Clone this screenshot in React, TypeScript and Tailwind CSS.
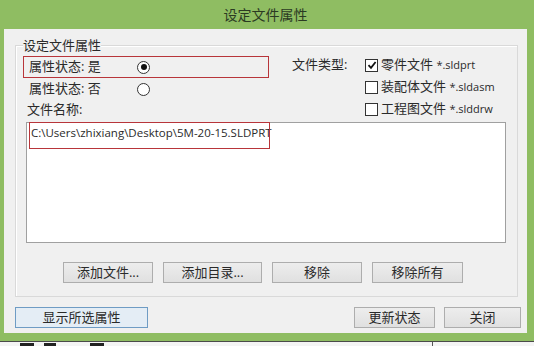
import React from "react";

const font = "font-['Open_Sans','Noto_Sans_CJK_SC',sans-serif]";

function Radio({ checked }: { checked?: boolean }) {
  return (
    <span className="w-[13px] h-[13px] rounded-full border border-[#333] bg-white flex items-center justify-center">
      {checked && <span className="w-[6px] h-[6px] rounded-full bg-[#111]" />}
    </span>
  );
}

function Check({ checked }: { checked?: boolean }) {
  return (
    <span className="w-[13px] h-[13px] border border-[#333] bg-white flex items-center justify-center shrink-0">
      {checked && (
        <svg width="10" height="10" viewBox="0 0 10 10">
          <path d="M1.5 5.2 L4 7.8 L8.6 2" fill="none" stroke="#111" strokeWidth="1.8" />
        </svg>
      )}
    </span>
  );
}

function Btn({ w, children, def }: { w: string; children: React.ReactNode; def?: boolean }) {
  return (
    <div
      className={`${w} h-[21px] flex items-center justify-center text-[13px] text-[#2a2a2a] border ${
        def ? "border-[#6f9cc4] bg-[#e4edf5]" : "border-[#adadad] bg-gradient-to-b from-[#ededed] to-[#e0e0e0]"
      }`}
    >
      {children}
    </div>
  );
}

export default function App() {
  return (
    <div className={`w-[534px] h-[346px] overflow-hidden bg-[#f7f7f7] flex flex-col ${font}`}>
      <div className="h-[341px] bg-[#8fbd62] pl-[4px] pr-[7px] pb-[8px] flex flex-col">
        <div className="h-[29px] flex items-center justify-center text-[14px] text-[#2b3a22]">设定文件属性</div>
        <div className="flex-1 bg-[#f0f0f0] flex flex-col">
          {/* group box */}
          <div className="mt-[16px] ml-[11px] mr-[9px] h-[252px] border border-[#d9d9d9] shadow-[inset_1px_1px_0_#ffffff] relative flex flex-col">
            <span className="absolute -top-[9px] left-[7px] bg-[#f0f0f0] text-[13px] leading-[16px] text-[#2a2a2a]">设定文件属性</span>
            <div className="mt-[10px] flex items-start">
              <div className="ml-[7px] flex flex-col">
                <div className="w-[246px] h-[22px] border border-[#b8353a] flex items-center pl-[5px]">
                  <span className="w-[108px] text-[13px] text-[#2a2a2a]">属性状态: 是</span>
                  <Radio checked />
                </div>
                <div className="h-[22px] flex items-center pl-[6px]">
                  <span className="w-[108px] text-[13px] text-[#2a2a2a]">属性状态: 否</span>
                  <Radio />
                </div>
                <div className="h-[20px] flex items-center pl-[4px] text-[13px] text-[#2a2a2a]">文件名称:</div>
              </div>
              <div className="ml-[23px] -mt-[2px] flex items-start">
                <div className="h-[22px] flex items-center text-[13px] text-[#2a2a2a] w-[73px]">文件类型:</div>
                <div className="flex flex-col">
                  {[
                    ["零件文件", "*.sldprt", true],
                    ["装配体文件", "*.sldasm", false],
                    ["工程图文件", "*.slddrw", false],
                  ].map(([t, e, c]) => (
                    <div key={t as string} className="h-[22px] flex items-center gap-[3px] text-[13px] text-[#2a2a2a]">
                      <Check checked={c as boolean} />
                      <span>
                        {t as string} <span className="text-[11px]">{e as string}</span>
                      </span>
                    </div>
                  ))}
                </div>
              </div>
            </div>
            <div className="mt-[2px] ml-[10px] w-[480px] h-[121px] bg-white border border-[#a0a0a0] relative">
              <div className="absolute -top-[1px] left-[2px] w-[241px] h-[27px] border border-[#b8353a]" />
              <div className="pl-[4px] pt-[2px] text-[11.5px] leading-[16px] text-[#2a2a2a] font-['Open_Sans',sans-serif]">
                C:\Users\zhixiang\Desktop\5M-20-15.SLDPRT
              </div>
            </div>
            <div className="mt-[19px] ml-[47px] flex gap-[10px]">
              <Btn w="w-[90px]">添加文件...</Btn>
              <Btn w="w-[99px]">添加目录...</Btn>
              <Btn w="w-[90px]">移除</Btn>
              <Btn w="w-[91px]">移除所有</Btn>
            </div>
          </div>
          <div className="mt-[10px] ml-[11px] mr-[6px] flex">
            <Btn w="w-[133px]" def>显示所选属性</Btn>
            <div className="flex-1" />
            <div className="flex gap-[9px]">
              <Btn w="w-[81px]">更新状态</Btn>
              <Btn w="w-[77px]">关闭</Btn>
            </div>
          </div>
        </div>
      </div>
      <div className="h-[5px] border-t border-[#4a4a4a] bg-[#f4f4f4] overflow-hidden flex">
        <span className="ml-[20px] mt-[1px] w-[14px] h-[4px] bg-[#222]" />
        <span className="ml-[10px] mt-[1px] w-[12px] h-[4px] bg-[#222]" />
        <span className="ml-[34px] mt-[1px] w-[14px] h-[4px] bg-[#222]" />
        <div className="flex-1" />
        <span className="w-px bg-[#555] mr-[101px]" />
      </div>
    </div>
  );
}
